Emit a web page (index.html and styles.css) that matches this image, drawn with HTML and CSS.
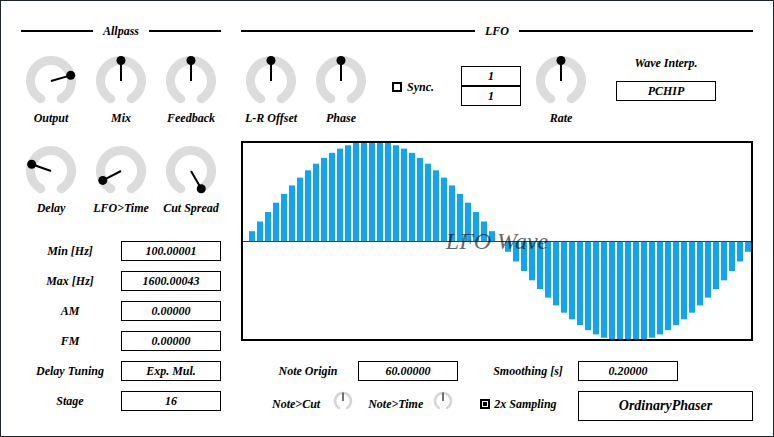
FILE: index.html
```html
<!DOCTYPE html>
<html>
<head>
<meta charset="utf-8">
<link rel="stylesheet" href="styles.css">
</head>
<body>
<div class="frame">
  <div class="col-left">
    <div class="section-head"><span class="rule"></span><span class="title">Allpass</span><span class="rule"></span></div>
    <div class="knob-grid r1">
      <div class="knob"><svg viewBox="0 0 52 52"><path class="arc" d="M15.75 43.75 A20.5 20.5 0 1 1 36.25 43.75"/><line class="ptr" x1="26" y1="26" x2="45.71" y2="20.35"/><circle cx="45.71" cy="20.35" r="4.5"/></svg><span class="label">Output</span></div>
      <div class="knob"><svg viewBox="0 0 52 52"><path class="arc" d="M15.75 43.75 A20.5 20.5 0 1 1 36.25 43.75"/><line class="ptr" x1="26" y1="26" x2="26" y2="5.5"/><circle cx="26" cy="5.5" r="4.5"/></svg><span class="label">Mix</span></div>
      <div class="knob"><svg viewBox="0 0 52 52"><path class="arc" d="M15.75 43.75 A20.5 20.5 0 1 1 36.25 43.75"/><line class="ptr" x1="26" y1="26" x2="26" y2="5.5"/><circle cx="26" cy="5.5" r="4.5"/></svg><span class="label">Feedback</span></div>
    </div>
    <div class="knob-grid r2">
      <div class="knob"><svg viewBox="0 0 52 52"><path class="arc" d="M15.75 43.75 A20.5 20.5 0 1 1 36.25 43.75"/><line class="ptr" x1="26" y1="26" x2="6.65" y2="19.22"/><circle cx="6.65" cy="19.22" r="4.5"/></svg><span class="label">Delay</span></div>
      <div class="knob"><svg viewBox="0 0 52 52"><path class="arc" d="M15.75 43.75 A20.5 20.5 0 1 1 36.25 43.75"/><line class="ptr" x1="26" y1="26" x2="7.8" y2="35.43"/><circle cx="7.8" cy="35.43" r="4.5"/></svg><span class="label">LFO&gt;Time</span></div>
      <div class="knob"><svg viewBox="0 0 52 52"><path class="arc" d="M15.75 43.75 A20.5 20.5 0 1 1 36.25 43.75"/><line class="ptr" x1="26" y1="26" x2="36.25" y2="43.75"/><circle cx="36.25" cy="43.75" r="4.5"/></svg><span class="label">Cut Spread</span></div>
    </div>
    <div class="params">
      <span class="label">Min [Hz]</span><div class="box">100.00001</div>
      <span class="label">Max [Hz]</span><div class="box">1600.00043</div>
      <span class="label">AM</span><div class="box">0.00000</div>
      <span class="label">FM</span><div class="box">0.00000</div>
      <span class="label">Delay Tuning</span><div class="box">Exp. Mul.</div>
      <span class="label">Stage</span><div class="box">16</div>
    </div>
  </div>

  <div class="col-right">
    <div class="section-head"><span class="rule"></span><span class="title">LFO</span><span class="rule"></span></div>
    <div class="lfo-top">
      <div class="knob"><svg viewBox="0 0 52 52"><path class="arc" d="M15.75 43.75 A20.5 20.5 0 1 1 36.25 43.75"/><line class="ptr" x1="26" y1="26" x2="26" y2="5.5"/><circle cx="26" cy="5.5" r="4.5"/></svg><span class="label">L-R Offset</span></div>
      <div class="knob gap"><svg viewBox="0 0 52 52"><path class="arc" d="M15.75 43.75 A20.5 20.5 0 1 1 36.25 43.75"/><line class="ptr" x1="26" y1="26" x2="26" y2="5.5"/><circle cx="26" cy="5.5" r="4.5"/></svg><span class="label">Phase</span></div>
      <div class="sync"><span class="check"></span><span>Sync.</span></div>
      <div class="fraction"><div>1</div><div>1</div></div>
      <div class="knob gap"><svg viewBox="0 0 52 52"><path class="arc" d="M15.75 43.75 A20.5 20.5 0 1 1 36.25 43.75"/><line class="ptr" x1="26" y1="26" x2="26" y2="5.5"/><circle cx="26" cy="5.5" r="4.5"/></svg><span class="label">Rate</span></div>
      <div class="interp"><span class="label">Wave Interp.</span><div class="box">PCHIP</div></div>
    </div>
    <svg class="wave" viewBox="0 0 512 200" width="512" height="200">
      <g class="bars">
        <rect x="8" y="90.2" width="6" height="9.8"/><rect x="16" y="80.5" width="6" height="19.5"/><rect x="24" y="71" width="6" height="29"/><rect x="32" y="61.7" width="6" height="38.3"/><rect x="40" y="52.9" width="6" height="47.1"/><rect x="48" y="44.4" width="6" height="55.6"/><rect x="56" y="36.6" width="6" height="63.4"/><rect x="64" y="29.3" width="6" height="70.7"/><rect x="72" y="22.7" width="6" height="77.3"/><rect x="80" y="16.9" width="6" height="83.1"/><rect x="88" y="11.8" width="6" height="88.2"/><rect x="96" y="7.6" width="6" height="92.4"/><rect x="104" y="4.3" width="6" height="95.7"/><rect x="112" y="1.9" width="6" height="98.1"/><rect x="120" y="0.5" width="6" height="99.5"/><rect x="128" y="0" width="6" height="100"/>
        <rect x="136" y="0.5" width="6" height="99.5"/><rect x="144" y="1.9" width="6" height="98.1"/><rect x="152" y="4.3" width="6" height="95.7"/><rect x="160" y="7.6" width="6" height="92.4"/><rect x="168" y="11.8" width="6" height="88.2"/><rect x="176" y="16.9" width="6" height="83.1"/><rect x="184" y="22.7" width="6" height="77.3"/><rect x="192" y="29.3" width="6" height="70.7"/><rect x="200" y="36.6" width="6" height="63.4"/><rect x="208" y="44.4" width="6" height="55.6"/><rect x="216" y="52.9" width="6" height="47.1"/><rect x="224" y="61.7" width="6" height="38.3"/><rect x="232" y="71" width="6" height="29"/><rect x="240" y="80.5" width="6" height="19.5"/><rect x="248" y="90.2" width="6" height="9.8"/>
        <rect x="264" y="101" width="6" height="9.8"/><rect x="272" y="101" width="6" height="19.5"/><rect x="280" y="101" width="6" height="29"/><rect x="288" y="101" width="6" height="38.3"/><rect x="296" y="101" width="6" height="47.1"/><rect x="304" y="101" width="6" height="55.6"/><rect x="312" y="101" width="6" height="63.4"/><rect x="320" y="101" width="6" height="70.7"/><rect x="328" y="101" width="6" height="77.3"/><rect x="336" y="101" width="6" height="83.1"/><rect x="344" y="101" width="6" height="88.2"/><rect x="352" y="101" width="6" height="92.4"/><rect x="360" y="101" width="6" height="95.7"/><rect x="368" y="101" width="6" height="98.1"/><rect x="376" y="101" width="6" height="99.5"/><rect x="384" y="101" width="6" height="100"/>
        <rect x="392" y="101" width="6" height="99.5"/><rect x="400" y="101" width="6" height="98.1"/><rect x="408" y="101" width="6" height="95.7"/><rect x="416" y="101" width="6" height="92.4"/><rect x="424" y="101" width="6" height="88.2"/><rect x="432" y="101" width="6" height="83.1"/><rect x="440" y="101" width="6" height="77.3"/><rect x="448" y="101" width="6" height="70.7"/><rect x="456" y="101" width="6" height="63.4"/><rect x="464" y="101" width="6" height="55.6"/><rect x="472" y="101" width="6" height="47.1"/><rect x="480" y="101" width="6" height="38.3"/><rect x="488" y="101" width="6" height="29"/><rect x="496" y="101" width="6" height="19.5"/><rect x="504" y="101" width="6" height="9.8"/>
      </g>
      <line class="axis" x1="0" y1="100.5" x2="512" y2="100.5"/>
      <text class="wave-title" x="256" y="108" text-anchor="middle">LFO Wave</text>
      <rect class="wave-border" x="1" y="1" width="510" height="198"/>
    </svg>
    <div class="row-a">
      <span class="label first">Note Origin</span><div class="box">60.00000</div>
      <span class="label second">Smoothing [s]</span><div class="box">0.20000</div>
    </div>
    <div class="row-b">
      <span class="label nc">Note&gt;Cut</span>
      <svg class="mini k1" viewBox="0 0 20 20"><path d="M6 16.93 A8 8 0 1 1 14 16.93"/><line x1="10" y1="10" x2="10" y2="1.5"/></svg>
      <span class="label nt">Note&gt;Time</span>
      <svg class="mini k2" viewBox="0 0 20 20"><path d="M6 16.93 A8 8 0 1 1 14 16.93"/><line x1="10" y1="10" x2="10" y2="1.5"/></svg>
      <div class="sampling"><span class="check on"></span><span>2x Sampling</span></div>
      <div class="box brand">OrdinaryPhaser</div>
    </div>
  </div>
</div>
</body>
</html>
```

FILE: styles.css
```css
* { box-sizing: border-box; }
body {
  margin: 0;
  background: #fff;
  font-family: "Liberation Serif", "Times New Roman", serif;
  font-style: italic;
  font-weight: bold;
  font-size: 12px;
  color: #000;
}
.frame {
  width: 774px;
  height: 437px;
  border: 1px solid #1e2529;
  padding: 20px 0 0 20px;
  display: flex;
  gap: 20px;
}
.col-left { width: 200px; display: flex; flex-direction: column; }
.col-right { width: 512px; display: flex; flex-direction: column; }

.section-head { height: 20px; display: flex; align-items: center; line-height: 20px; }
.section-head .rule { flex: 1; height: 2px; background: #000; }
.section-head .title { padding: 0 10px; }

.knob-grid { display: grid; grid-template-columns: repeat(3, 60px); column-gap: 10px; }
.knob-grid.r1 { margin-top: 14px; }
.knob-grid.r2 { margin-top: 20px; }
.knob { width: 60px; display: flex; flex-direction: column; align-items: center; flex: none; }
.knob svg { display: block; width: 52px; height: 52px; }
.knob .arc { fill: none; stroke: #dcdcdc; stroke-width: 9; stroke-linecap: round; }
.knob .ptr { stroke: #000; stroke-width: 2; }
.knob circle { fill: #000; }
.knob .label { margin-top: 4px; line-height: 14px; white-space: nowrap; }

.params {
  margin-top: 26px;
  display: grid;
  grid-template-columns: 98px 100px;
  column-gap: 2px;
  row-gap: 10px;
}
.params .label { line-height: 20px; text-align: center; white-space: nowrap; }
.box {
  height: 20px;
  border: 1px solid #000;
  line-height: 18px;
  text-align: center;
  white-space: nowrap;
}

.lfo-top { margin-top: 14px; height: 70px; display: flex; align-items: flex-start; }
.lfo-top .knob.gap { margin-left: 10px; }
.sync {
  margin-left: 21px;
  margin-top: 25px;
  width: 69px;
  flex: none;
  display: flex;
  align-items: center;
  gap: 5px;
  line-height: 14px;
}
.check { width: 10px; height: 10px; border: 2px solid #000; background: #fff; flex: none; }
.check.on { padding: 1px; }
.check.on::after { content: ""; display: block; width: 4px; height: 4px; background: #000; }
.fraction { margin-top: 11px; width: 60px; flex: none; border: 1px solid #000; }
.fraction div { height: 18px; line-height: 18px; text-align: center; }
.fraction div + div { height: 20px; border-top: 2px solid #000; }
.interp {
  margin-left: 25px;
  margin-top: 1px;
  width: 100px;
  flex: none;
  display: flex;
  flex-direction: column;
  align-items: center;
}
.interp .label { line-height: 14px; }
.interp .box { margin-top: 11px; width: 100px; }

.wave { display: block; margin-top: 16px; overflow: hidden; }
.wave .bars rect { fill: #12a4ee; }
.wave .axis { stroke: #3a3a3a; stroke-width: 1; }
.wave .wave-title {
  font-family: "Liberation Serif", "Times New Roman", serif;
  font-style: italic;
  font-weight: normal;
  font-size: 24px;
  fill: rgba(0, 0, 0, 0.6);
}
.wave .wave-border { fill: none; stroke: #000; stroke-width: 2; }

.row-a { margin-top: 20px; height: 20px; display: flex; }
.row-a .label { width: 100px; text-align: center; line-height: 20px; white-space: nowrap; }
.row-a .label.first { margin-left: 17px; }
.row-a .label.second { margin-left: 20px; }
.row-a .box { width: 100px; }

.row-b { margin-top: 10px; height: 30px; display: flex; align-items: flex-start; }
.row-b .label { margin-top: 6px; line-height: 14px; white-space: nowrap; }
.row-b .label.nc { margin-left: 31px; }
.row-b .label.nt { margin-left: 15px; }
.mini { display: block; width: 20px; height: 20px; flex: none; }
.mini path { fill: none; stroke: #d6d6d6; stroke-width: 2.5; stroke-linecap: round; }
.mini line { stroke: #444; stroke-width: 1.5; }
.mini.k1 { margin-left: 13px; }
.mini.k2 { margin-left: 10px; }
.sampling {
  margin-left: 27px;
  margin-top: 6px;
  display: flex;
  align-items: center;
  gap: 4px;
  line-height: 14px;
  white-space: nowrap;
}
.brand {
  margin-left: auto;
  width: 175px;
  height: 30px;
  line-height: 28px;
  font-size: 14px;
}
```
